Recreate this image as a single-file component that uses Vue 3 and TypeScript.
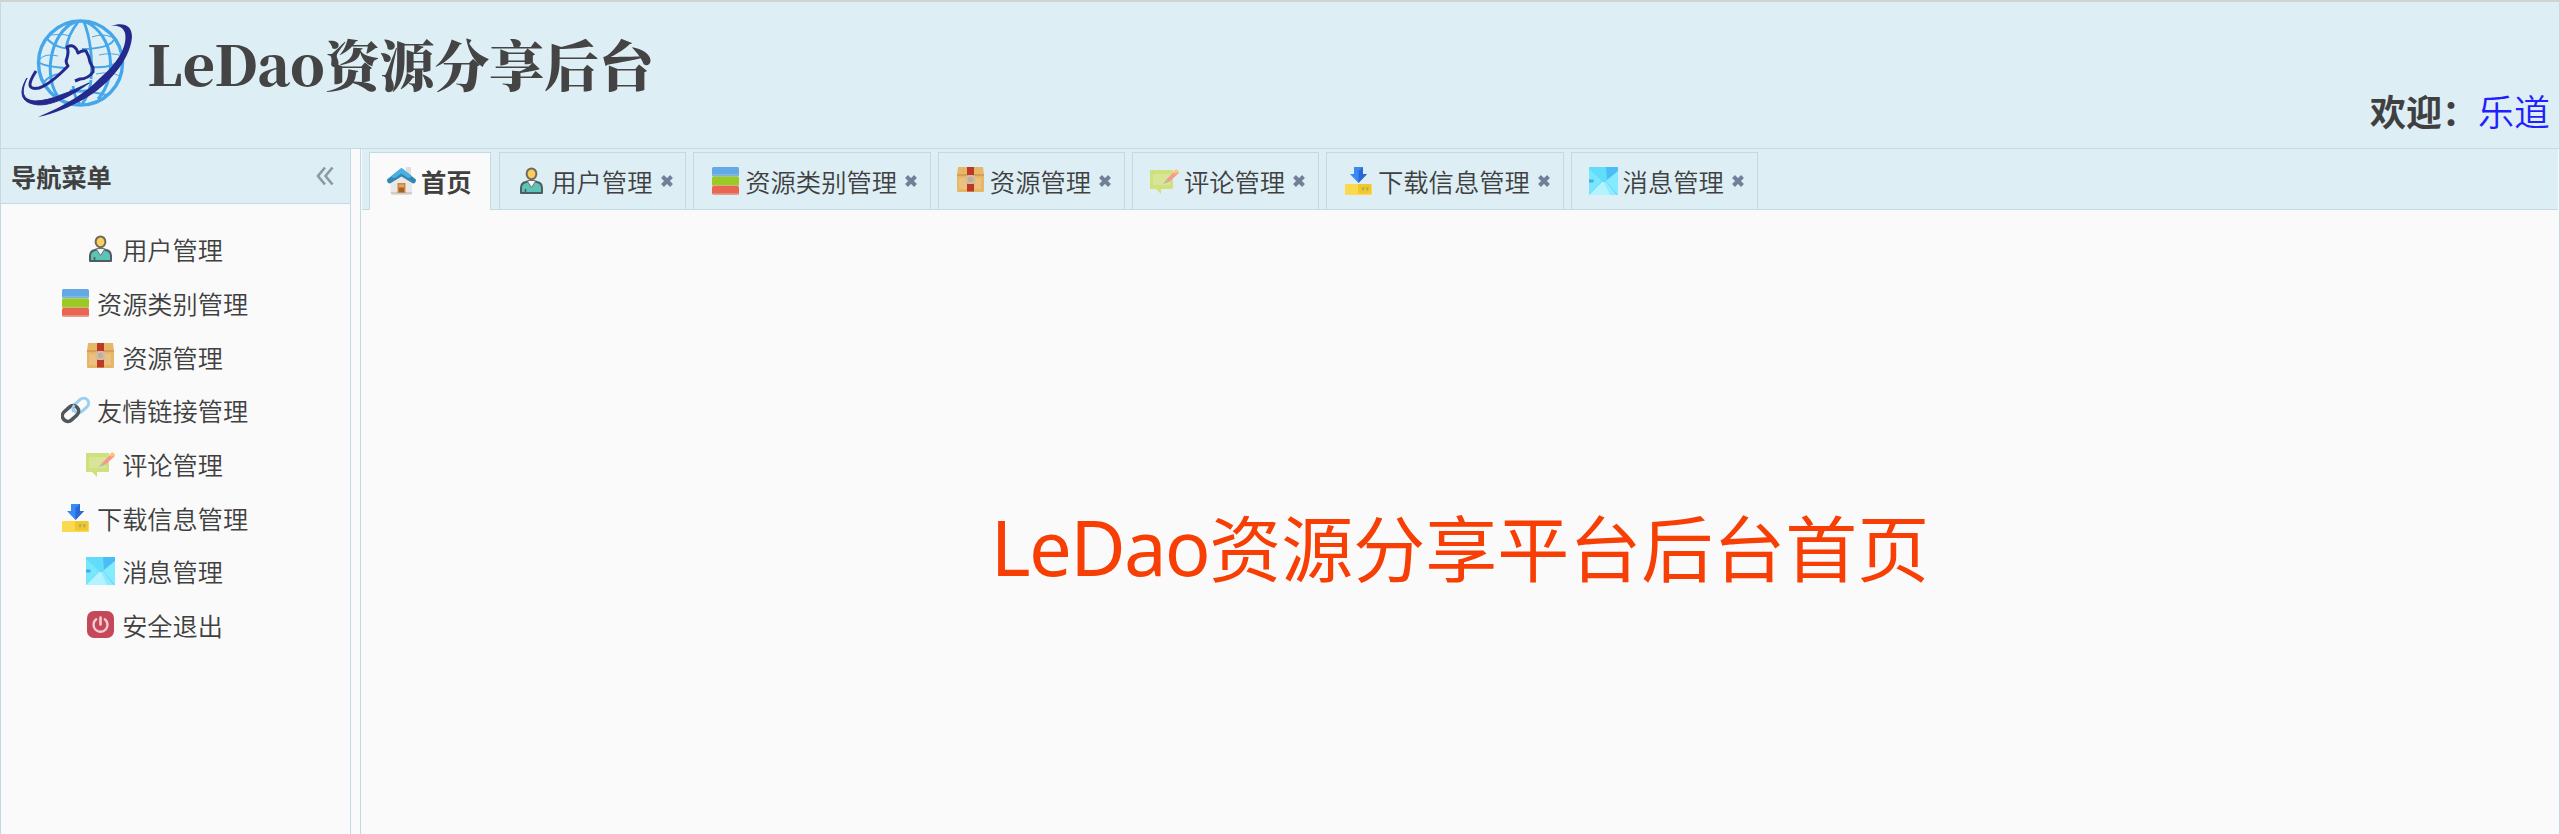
<script setup lang="ts">
import { computed, defineComponent, h, ref } from 'vue'

interface Entry {
  icon: string
  label: string
}

const menu: Entry[] = [
  { icon: 'user', label: '用户管理' },
  { icon: 'books', label: '资源类别管理' },
  { icon: 'box', label: '资源管理' },
  { icon: 'link', label: '友情链接管理' },
  { icon: 'comment', label: '评论管理' },
  { icon: 'download', label: '下载信息管理' },
  { icon: 'mail', label: '消息管理' },
  { icon: 'power', label: '安全退出' },
]

const tabs = ref<Entry[]>([
  { icon: 'home', label: '首页' },
  ...menu.filter((m) => m.icon !== 'link' && m.icon !== 'power'),
])
const active = ref('首页')
const isHome = computed(() => active.value === '首页')

function open(entry: Entry) {
  if (!tabs.value.some((t) => t.label === entry.label)) tabs.value.push(entry)
  active.value = entry.label
}
function close(label: string) {
  tabs.value = tabs.value.filter((t) => t.label !== label)
  if (active.value === label) active.value = '首页'
}

type Shape = [string, Record<string, string | number>]

const shapes: Record<string, Shape[]> = {
  home: [
    ['path', { d: 'M19 0h5v10h-5z', fill: '#dedede' }],
    ['path', { d: 'M3.500 13L14 5l11 8v13q0 1.500-1.500 1.500h-18.500q-1.500 0-1.500-1.500z', fill: '#e9e8e6' }],
    ['path', { d: 'M4 25h21v1q0 1.500-1.500 1.500h-18q-1.500 0-1.500-1.500z', fill: '#cfcdca' }],
    ['path', { d: 'M14.500 1L0 12.500q0 4 3 4L14.500 9.500 26 16.500q3 0 3-4z', fill: '#3587b3' }],
    ['path', { d: 'M14.500 1L4 9.300q2 2 4.500 1.500l6-4.300 6 4.300q2.500.500 4.500-1.500z', fill: '#49b0e4' }],
    ['path', { d: 'M10.500 16h8v10h-8z', fill: '#c98946' }],
    ['path', { d: 'M12 18h5v7h-5z', fill: '#a85f24' }],
    ['path', { d: 'M12 17.500h5v3h-5z', fill: '#dfa65f' }],
  ],
  user: [
    ['path', { d: 'M4 26v-5q0-5 5-6l3-1h5l3 1q5 1 5 6v5z', fill: '#5cc4b6', stroke: '#515c60', 'stroke-width': 2, 'stroke-linejoin': 'round' }],
    ['path', { d: 'M10.500 14.500l4 6 4-6-1.500-1h-5z', fill: '#f6f6f4', stroke: '#6a7377', 'stroke-width': 1 }],
    ['path', { d: 'M8.500 22v4', stroke: '#515c60', 'stroke-width': 1.6, fill: 'none' }],
    ['ellipse', { cx: 14.5, cy: 6.8, rx: 4.9, ry: 5.4, fill: '#fccd5b', stroke: '#6d6a60', 'stroke-width': 2 }],
  ],
  books: [
    ['rect', { x: 1, y: 0, width: 27, height: 9.5, rx: 1.5, fill: '#62a9e5' }],
    ['rect', { x: 1, y: 7, width: 27, height: 1.7, fill: '#83b9d6' }],
    ['rect', { x: 1, y: 9.5, width: 27, height: 9, rx: 1.5, fill: '#9bca22' }],
    ['rect', { x: 1, y: 17.2, width: 27, height: 1.5, fill: '#b7ba51' }],
    ['rect', { x: 1, y: 19, width: 27, height: 8.5, rx: 1.5, fill: '#ea6552' }],
    ['rect', { x: 2, y: 26, width: 26, height: 1.5, fill: '#e68b80' }],
  ],
  box: [
    ['path', { d: 'M2 0h25l1 8v16q0 1-1 1H2q-1 0-1-1V8z', fill: '#e7b768' }],
    ['path', { d: 'M1 7h27v2H1z', fill: '#d89e53' }],
    ['path', { d: 'M3 11h22v11H3z', fill: '#edc080' }],
    ['path', { d: 'M11 0h7v24.500h-7z', fill: '#bd3827' }],
    ['rect', { x: 9.5, y: 8, width: 10, height: 9, rx: 3, fill: '#d4bd9d' }],
    ['circle', { cx: 14.5, cy: 12.5, r: 2.7, fill: '#bdaf9e' }],
  ],
  link: [
    ['rect', { x: 11.5, y: 4.5, width: 17, height: 10, rx: 5, transform: 'rotate(-42 20 9.500)', fill: 'none', stroke: '#9bcff0', 'stroke-width': 3 }],
    ['rect', { x: 0.5, y: 12, width: 18, height: 11, rx: 5.5, transform: 'rotate(-42 9.500 17.500)', fill: 'none', stroke: '#50565b', 'stroke-width': 3.6 }],
    ['path', { d: 'M12.500 16q-2-4 1-7', fill: 'none', stroke: '#9bcff0', 'stroke-width': 2.6 }],
  ],
  comment: [
    ['path', { d: 'M0 3h23v18q0 1-1 1H11v5l-5-5H0z', fill: '#cfe17d' }],
    ['path', { d: 'M3 7h17v11H3z', fill: '#d8e596' }],
    ['path', { d: 'M16 13L26 3l3 3-10 9z', fill: '#f69992' }],
    ['path', { d: 'M23 5l3-3 3 2-3 3z', fill: '#ffc66a' }],
    ['path', { d: 'M13 17l3-4 3 2z', fill: '#b7b9a6' }],
  ],
  download: [
    ['path', { d: 'M10 0h9v7h4l-8.500 9L6 7h4z', fill: '#378bf4' }],
    ['path', { d: 'M14.500 4L19 0v7h4l-8.500 9z', fill: '#2c68d3' }],
    ['rect', { x: 1, y: 17, width: 27, height: 11, rx: 1, fill: '#fbd94c' }],
    ['path', { d: 'M14 17h13v9.500H14z', fill: '#f1c72d' }],
    ['path', { d: 'M17.500 20.500h3.300L19 24zM21.700 20.500H25L23.300 24z', fill: '#a4a96a' }],
  ],
  mail: [
    ['path', { d: 'M0 0h29v28H0z', fill: '#61dcfb' }],
    ['path', { d: 'M0 2l13 12L0 27z', fill: '#78e7fc' }],
    ['path', { d: 'M17 0h12v4L18 13z', fill: '#4bbdf6' }],
    ['path', { d: 'M29 4v24L17 14z', fill: '#83eaff' }],
    ['path', { d: 'M0 28l13-13 4 0 10 13z', fill: '#b3f3ff' }],
    ['path', { d: 'M15 15h2l10 13h-6z', fill: '#8eeaff' }],
    ['path', { d: 'M0 12.500l4 0 1 1.500-1 1.500H0z', fill: '#42aaf0' }],
  ],
  power: [
    ['rect', { x: 1, y: 0, width: 27, height: 27, rx: 7, fill: '#c5485a' }],
    ['path', { d: 'M10.200 8.200a7 7 0 1 0 8.600 0', fill: 'none', stroke: '#f3cdd2', 'stroke-width': 2.4, 'stroke-linecap': 'round' }],
    ['path', { d: 'M14.500 6.500v7', stroke: '#f3cdd2', 'stroke-width': 2.6, 'stroke-linecap': 'round' }],
  ],
}

const Glyph = defineComponent({
  props: { name: { type: String, required: true } },
  setup(props) {
    return () =>
      h('svg', { viewBox: '0 0 29 29', width: 29, height: 29 }, shapes[props.name].map(([tag, attrs]) => h(tag, attrs)))
  },
})
</script>

<template>
  <div class="page">
    <header class="banner">
      <div class="brand">
        <svg class="logo" viewBox="0 0 115 104" width="115" height="104">
          <g fill="none" stroke="#45a7ea" stroke-width="3">
            <circle cx="60.500" cy="46" r="42" stroke-width="3.400" />
            <path d="M55 5C30 15 22 62 40 82M66 5C94 18 98 60 78 82" />
            <path d="M58 5C51 14 47 24 46 32M64 5C70 20 73 42 71 62M53 69C54 77 57 84 60 87M71 63C70 74 66 82 62 87" stroke-width="2.800" />
            <path d="M27 22C35 30 45 32 48 31M62 32C78 32 90 29 94 23M20 46C26 50 36 50 45 51M73 50C85 51 96 48 102 42M24 65Q30 58 39 57M50 73Q63 76 78 71M36 80Q58 70 86 78" stroke-width="2" />
            <path d="M31 18Q42 16 51 19M72 20Q83 16 91 20M20 42Q25 36 38 39M79 38Q92 35 102 39M76 57Q90 54 100 59" stroke-width="1" />
          </g>
          <g fill="#25288c">
            <path d="M91 9C103 5 112 8 112 20C110 45 85 70 66 81C50 90 34 97 18 100C44 89 66 76 80 61C97 47 108 29 105 16C103 10 98 8 91 9Z" />
            <path d="M7 61C0 76 3 83 15 84C31 84 51 74 69 66C49 81 27 91 13 87C-1 84 0 72 7 61Z" stroke="#25288c" />
          </g>
          <path d="M16 54C7 68 8 73 19 71C31 67 44 53 48 49Q45 45 47 41Q49 34 47 30Q55 26 58 36Q63 33 66 34Q69 39 70 45L73 51V55Q68 62 60 62L55 64" fill="none" stroke="#25288c" stroke-width="3" stroke-linejoin="round" />
        </svg>
        <h1 class="title">LeDao资源分享后台</h1>
      </div>
      <div class="welcome"><b>欢迎：</b><a>乐道</a></div>
    </header>

    <div class="body">
      <aside class="side">
        <div class="side-head">
          <span>导航菜单</span>
          <svg viewBox="0 0 18 20" width="18" height="20"><path d="M9 1.500L2 10l7 8.500M16.500 1.500L9.500 10l7 8.500" /></svg>
        </div>
        <nav class="menu">
          <a v-for="m in menu" :key="m.label" class="item" @click="open(m)">
            <Glyph :name="m.icon" /><span>{{ m.label }}</span>
          </a>
        </nav>
      </aside>

      <main class="center">
        <div class="tabs">
          <div
            v-for="t in tabs"
            :key="t.label"
            class="tab"
            :class="{ active: t.label === active, fixed: t.icon === 'home' }"
            @click="active = t.label"
          >
            <Glyph :name="t.icon" /><span>{{ t.label }}</span>
            <svg v-if="t.icon !== 'home'" class="close" viewBox="0 0 12 12" width="12" height="12" @click.stop="close(t.label)">
              <path d="M1.500 1.500l9 9M10.500 1.500l-9 9" />
            </svg>
          </div>
        </div>
        <div class="content">
          <p v-if="isHome" class="hero"><span class="hero-latin">LeDao</span>资源分享平台后台首页</p>
        </div>
      </main>
    </div>
  </div>
</template>

<style>
body {
  background: #fafafa;
}
</style>

<style scoped>
.page {
  box-sizing: border-box;
  height: 834px;
  display: flex;
  flex-direction: column;
  overflow: hidden;
  border-top: 2px solid #cfd3d4;
  background: #fafafa;
  color: #404040;
  font-family: 'Noto Sans CJK SC', sans-serif;
}
.banner {
  box-sizing: border-box;
  height: 147px;
  flex: none;
  display: flex;
  justify-content: space-between;
  background: #ddeef5;
  border: 1px solid #c5d9e3;
  border-top: 0;
}
.brand {
  display: flex;
  align-items: flex-start;
  padding: 15px 0 0 19px;
}
.logo {
  flex: none;
}
.title {
  margin: 16px 0 0 12px;
  font: 900 54.800px/60px 'Noto Serif CJK SC', 'Noto Sans CJK SC', serif;
  color: #444;
  white-space: nowrap;
}
.welcome {
  align-self: flex-end;
  padding-right: 9px;
  margin-bottom: 20px;
  font-size: 36px;
  line-height: 36px;
  white-space: nowrap;
}
.welcome a {
  color: #1f1fff;
  font-weight: 350;
}
.body {
  flex: 1;
  min-height: 0;
  display: flex;
  gap: 9px;
}
.side {
  box-sizing: border-box;
  width: 351px;
  border: 1px solid #c5d9e3;
  border-width: 0 1px;
}
.side-head {
  height: 54px;
  display: flex;
  align-items: center;
  justify-content: space-between;
  padding: 0 16px 0 10px;
  background: #ddeef5;
  border-bottom: 1px solid #c5d9e3;
  font-size: 25.200px;
  font-weight: 700;
}
.side-head svg {
  fill: none;
  stroke: #8b9a9f;
  stroke-width: 2.600;
}
.menu {
  padding: 19px 42px 0 0;
}
.item {
  height: 53.700px;
  display: flex;
  align-items: center;
  justify-content: center;
  gap: 7px;
  font-size: 25.200px;
  line-height: 36px;
  font-weight: 350;
  cursor: pointer;
}
.item span {
  margin-bottom: 1px;
}
.center {
  box-sizing: border-box;
  flex: 1;
  min-width: 0;
  display: flex;
  flex-direction: column;
  padding: 0 1px;
  border: 1px solid #c5d9e3;
  border-width: 0 1px;
}
.tabs {
  box-sizing: border-box;
  height: 61px;
  display: flex;
  gap: 7px;
  padding: 3px 0 0 7px;
  background: #ddeef5;
  border-bottom: 1px solid #c5d9e3;
}
.tab {
  box-sizing: border-box;
  height: 57px;
  display: flex;
  align-items: center;
  padding: 0 12.700px 0 17px;
  border: 1px solid #c5d9e3;
  border-bottom: 0;
  font-size: 25.330px;
  font-weight: 350;
  white-space: nowrap;
}
.tab span {
  margin: 0 0 0 5px;
}
.tab.fixed {
  padding-right: 18.500px;
  margin-right: 1px;
}
.tab.active {
  height: 58px;
  padding-bottom: 1px;
  background: #fafafa;
  font-weight: 700;
}
.close {
  margin-left: 8px;
  stroke: #718096;
  stroke-width: 4;
}
.content {
  flex: 1;
  display: flex;
  justify-content: center;
}
.hero {
  margin: 281px 0 0;
  font-size: 72px;
  line-height: 108px;
  font-weight: 400;
  color: #f73f05;
  white-space: nowrap;
}
.hero-latin {
  font-family: 'Noto Sans', sans-serif;
  font-size: 76px;
  letter-spacing: -1.700px;
}
</style>
